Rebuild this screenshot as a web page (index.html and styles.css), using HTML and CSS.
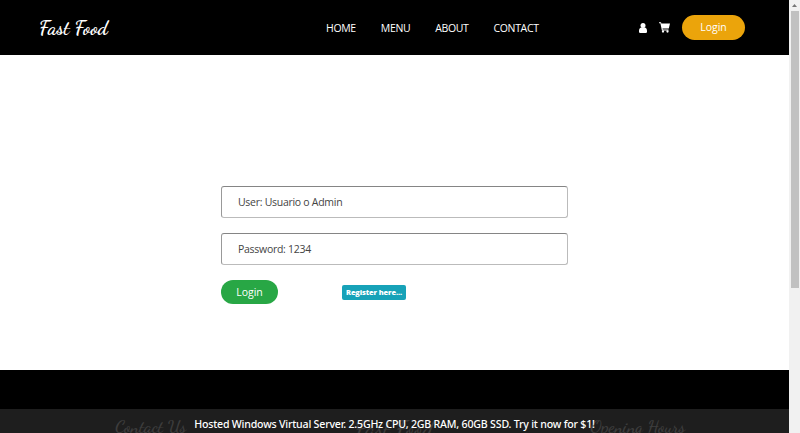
FILE: index.html
```html
<!DOCTYPE html>
<html lang="en">
<head>
<meta charset="utf-8">
<title>Fast Food</title>
<link rel="stylesheet" href="styles.css">
</head>
<body>
<div class="page">
  <header class="header">
    <a class="brand">Fast Food</a>
    <nav class="nav">
      <a>HOME</a><a>MENU</a><a>ABOUT</a><a>CONTACT</a>
    </nav>
    <div class="options">
      <svg class="user" viewBox="0 0 8 10"><circle cx="4" cy="2.6" r="2.5"/><path d="M2 4.5h4C7.4 5 8 6.200 8 8v.8Q8 10 6.800 10H1.200Q0 10 0 8.800V8c0-1.800.6-3 2-3.500z"/></svg>
      <svg class="cart" viewBox="0 0 11 11"><path d="M0 .3h2l.4 1.200H11L9.800 6.400H3.500l.2 1h5.800v1H2.900L1.400 1.300H0z"/><circle cx="4" cy="9.500" r="1.150"/><circle cx="8.500" cy="9.500" r="1.150"/></svg>
      <a class="btn btn-order">Login</a>
    </div>
  </header>
  <main class="main">
    <form class="form">
      <div class="field">User: Usuario o Admin</div>
      <div class="field">Password: 1234</div>
      <div class="actions">
        <a class="btn btn-login">Login</a>
        <a class="badge">Register here...</a>
      </div>
    </form>
  </main>
  <footer class="footer">
    <h4 class="contact">Contact Us</h4>
    <h4 class="name">Fast Food</h4>
    <h4 class="hours">Opening Hours</h4>
  </footer>
  <div class="banner"><span>Hosted Windows Virtual Server. 2.5GHz CPU, 2GB RAM, 60GB SSD. Try it now for $1!</span></div>
</div>
<div class="scrollbar">
  <svg class="arrow" viewBox="0 0 5 3"><path d="M0 3L2.500 0 5 3z"/></svg>
  <div class="thumb"></div>
</div>
</body>
</html>
```
FILE: styles.css
```css
* { box-sizing: border-box; }
body {
  margin: 0;
  height: 433px;
  display: flex;
  overflow: hidden;
  background: #fff;
  font-family: "Open Sans", sans-serif;
  font-size: 10.5px;
}
.page { position: relative; width: 789px; height: 433px; overflow: hidden; }
.header {
  height: 55px;
  background: #000;
  color: #fff;
  display: flex;
  align-items: center;
  padding: 0 44px 0 39px;
}
.brand, .footer h4 {
  font-family: "Dancing Script", cursive;
  white-space: nowrap;
}
.brand { width: 287px; font-size: 19.7px; line-height: 22px; font-weight: 700; }
.nav { display: flex; gap: 25px; font-size: 10.5px; line-height: 14px; letter-spacing: -0.35px; }
.options { margin-left: auto; display: flex; align-items: center; }
.options svg { fill: #fff; }
.user { width: 8px; height: 10px; margin-right: 12px; }
.cart { width: 11px; height: 11px; margin-right: 12px; }
.btn {
  display: flex;
  align-items: center;
  justify-content: center;
  color: #fff;
  border-radius: 20px;
  padding-bottom: 1px;
}
.btn-order { width: 63px; height: 25px; background: #eba40b; }
.main { height: 315px; padding: 131px 0 0 221px; }
.form { width: 347px; }
.field {
  height: 32px;
  margin-bottom: 15px;
  padding-left: 16px;
  display: flex;
  align-items: center;
  color: #444;
  letter-spacing: -0.28px;
  border: 1px solid #bbb;
  border-top-color: #858585;
  border-left-color: #999;
  border-radius: 3px;
}
.actions { display: flex; align-items: center; gap: 64px; }
.btn-login { width: 57px; height: 24px; background: #28a745; }
.badge {
  width: 64px;
  height: 15px;
  display: flex;
  align-items: center;
  justify-content: center;
  white-space: nowrap;
  background: #17a2b8;
  color: #fff;
  border-radius: 2px;
  padding-bottom: 1px;
  font-size: 7.4px;
  font-weight: 800;
  letter-spacing: -0.1px;
}
.footer {
  height: 63px;
  background: #000;
  color: #fff;
  display: flex;
  padding: 47px 0 0 29px;
}
.footer h4 { width: 243.500px; margin: 0; text-align: center; font-size: 17.9px; line-height: 20px; font-weight: 500; }
.footer .name { font-size: 22.8px; line-height: 24px; }
.banner {
  position: absolute;
  left: 0;
  bottom: 0;
  width: 100%;
  height: 24px;
  display: flex;
  align-items: center;
  justify-content: center;
  padding-top: 5px;
  background: rgba(34, 34, 34, 0.88);
  color: #fff;
  font-family: "Noto Sans", sans-serif;
  font-size: 10.6px;
  font-weight: 500;
  letter-spacing: -0.2px;
  white-space: nowrap;
}
.scrollbar { width: 11px; height: 433px; background: #f1f1f1; display: flex; flex-direction: column; align-items: center; }
.arrow { width: 5px; height: 3px; margin: 4px 0; fill: #777; }
.thumb { width: 8px; height: 277px; background: #c1c1c1; }
```
